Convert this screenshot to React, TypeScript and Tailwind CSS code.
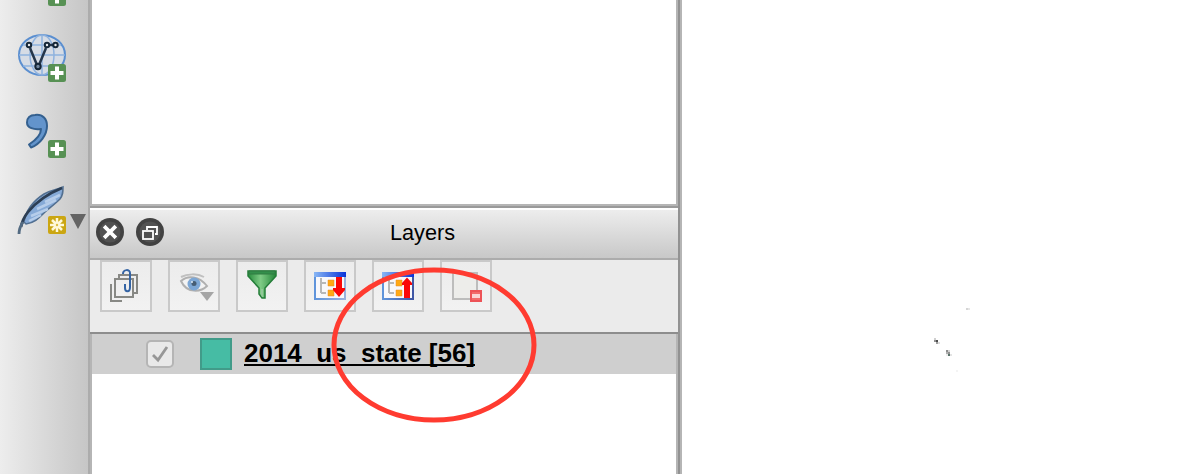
import React from "react";

function PlusBadge() {
  return (
    <svg className="block h-[18px] w-[18px]" viewBox="0 0 18 18">
      <rect width="18" height="18" rx="2.5" fill="#579154" />
      <path d="M9 2.500v13M2.500 9h13" stroke="#fff" strokeWidth="4" />
    </svg>
  );
}

function VectorGlobe() {
  return (
    <svg className="block h-[44px] w-[50px]" viewBox="0 0 50 44">
      <ellipse cx="24" cy="21" rx="23" ry="20" fill="#d6dce5" stroke="#5b8fd0" strokeWidth="2" />
      <g fill="none" stroke="#8fb2de" strokeWidth="1.5">
        <path d="M1 21h46M5 11h38M5 32h38M24 1v40" />
        <ellipse cx="24" cy="21" rx="12" ry="20" />
      </g>
      <path d="M12 14L19 31M28 14L21 31M31 11h4" stroke="#24364b" strokeWidth="2.500" fill="none" />
      <g fill="#e6e9ed" stroke="#152637" strokeWidth="2">
        <circle cx="11" cy="11" r="2.200" />
        <circle cx="29" cy="11" r="2.200" />
        <circle cx="37.5" cy="11" r="2.200" />
        <circle cx="20" cy="32.5" r="2.700" fill="#73889f" />
      </g>
    </svg>
  );
}

function Comma() {
  return (
    <svg className="block h-[36px] w-[25px]" viewBox="0 0 25 36">
      <path
        d="M11 2C19 1 23 6 23 13C23 22 16 31 7 34.500L5 31.500C12 27 17 21 17 16C10 17 3 15 3 9.500C3 5 6 2 11 2Z"
        fill="#6394cc" stroke="#34608f" strokeWidth="2" strokeLinejoin="round"
      />
    </svg>
  );
}

function Feather() {
  return (
    <svg className="block h-[50px] w-[48px]" viewBox="0 0 48 50">
      <path
        d="M7 37C9 25 16 16 27 9C34 5 40 5 46 2C46 7 46 10 43 14C37 20 31 24 27 28C21 34 17 38 9 39Z"
        fill="#86aad7" stroke="#526f90" strokeWidth="1.500"
      />
      <path d="M14 31L31 24M12 36L24 30M20 24L39 15M28 17L43 10" stroke="#b6cdea" strokeWidth="2.500" />
      <path d="M4 42C5 36 7 32 11 27C20 16 30 9 45 3" stroke="#2c3e54" strokeWidth="2.800" fill="none" />
      <path d="M2 49C2 44 4 40 6 37" stroke="#536b82" strokeWidth="2.800" fill="none" />
    </svg>
  );
}

function StarBadge() {
  return (
    <svg className="block h-[18px] w-[18px]" viewBox="0 0 18 18">
      <rect width="18" height="18" rx="2" fill="#cba612" />
      <path d="M9 2v14M2 9h14M4 4l10 10M14 4L4 14" stroke="#fff9d8" strokeWidth="2.500" />
      <circle cx="9" cy="9" r="1.200" fill="#dcbe44" />
    </svg>
  );
}

function Toolbar() {
  return (
    <aside className="relative h-[474px] w-[90px] shrink-0 overflow-hidden border-r-2 border-[#acacac] bg-[linear-gradient(to_right,#ededed,#c6c6c6)]">
      <div className="absolute left-[48px] top-[-12px]"><PlusBadge /></div>
      <div className="absolute left-[18px] top-[34px]"><VectorGlobe /></div>
      <div className="absolute left-[48px] top-[64px]"><PlusBadge /></div>
      <div className="absolute left-[24px] top-[113px]"><Comma /></div>
      <div className="absolute left-[48px] top-[140px]"><PlusBadge /></div>
      <div className="absolute left-[17px] top-[185px]"><Feather /></div>
      <div className="absolute left-[48px] top-[216px]"><StarBadge /></div>
      <svg className="absolute left-[70px] top-[214px] h-[16px] w-[16px]" viewBox="0 0 16 16">
        <path d="M0 0h16L8 15Z" fill="#646464" />
      </svg>
    </aside>
  );
}

function CloseIcon() {
  return (
    <svg className="block h-7 w-7" viewBox="0 0 28 28">
      <circle cx="14" cy="14" r="14" fill="#424242" />
      <circle cx="14" cy="14" r="10.500" fill="#525252" />
      <path d="M9.500 9.500l9 9M18.500 9.500l-9 9" stroke="#fff" strokeWidth="3.800" strokeLinecap="square" />
    </svg>
  );
}

function RestoreIcon() {
  return (
    <svg className="block h-7 w-7" viewBox="0 0 28 28">
      <circle cx="14" cy="14" r="14" fill="#424242" />
      <circle cx="14" cy="14" r="10.500" fill="#525252" />
      <path d="M11 12V9h10v7h-2" fill="none" stroke="#fff" strokeWidth="1.800" />
      <rect x="7" y="13" width="10" height="8" fill="#525252" stroke="#fff" strokeWidth="1.800" />
    </svg>
  );
}

function AddGroupIcon() {
  return (
    <svg className="h-12 w-12" viewBox="0 0 48 48" fill="none">
      <path d="M17 16v-3h18v18h-5M9 22v17h11" stroke="#888985" strokeWidth="2" />
      <rect x="13" y="17" width="18" height="18" stroke="#888985" strokeWidth="2" />
      <path d="M21 12C21 7 28 7 28 11v14c0 6-5 5-5 1v-4" stroke="#3464a4" strokeWidth="2" />
    </svg>
  );
}

function EyeIcon() {
  return (
    <svg className="h-12 w-12" viewBox="0 0 48 48" fill="none">
      <path d="M11 15C17 12 27 11 34 15" stroke="#c0c0c0" strokeWidth="2" />
      <path d="M11 19C18 13 29 14 37 24C31 30 17 32 11 19Z" fill="#f3f3f3" stroke="#b0b0b0" strokeWidth="2" />
      <circle cx="24" cy="22" r="6.500" fill="#7da7d5" />
      <circle cx="24" cy="21.500" r="2.500" fill="#465d74" />
      <circle cx="22" cy="20" r="1" fill="#dce8f3" />
      <path d="M30 30h14l-7 9Z" fill="#a5a5a5" />
    </svg>
  );
}

function FilterIcon() {
  return (
    <svg className="h-12 w-12" viewBox="0 0 48 48">
      <defs>
        <linearGradient id="funnel" x1="0" x2="1">
          <stop offset="0" stopColor="#278d3d" />
          <stop offset=".45" stopColor="#7ecb85" />
          <stop offset="1" stopColor="#238639" />
        </linearGradient>
      </defs>
      <path d="M10 9h28v5L27 26v10h-3l-3-4v-6L10 14Z" fill="url(#funnel)" stroke="#247d39" strokeWidth="1.500" />
      <path d="M11 9h26v3H11Z" fill="#338f4b" stroke="#307a42" />
      <path d="M23 27h2v8h-1l-1-2Z" fill="#92c79a" />
    </svg>
  );
}

function TreeIcon({ up = false }: { up?: boolean }) {
  return (
    <svg className="h-12 w-12" viewBox="0 0 48 48">
      <defs>
        <linearGradient id={up ? "barUp" : "barDown"} x1="0" x2="1">
          <stop offset="0" stopColor="#89b7f4" />
          <stop offset="1" stopColor="#0833d9" />
        </linearGradient>
        <linearGradient id={up ? "frameUp" : "frameDown"} x1="0" x2="1">
          <stop offset="0" stopColor="#5f94db" />
          <stop offset="1" stopColor={up ? "#4057a5" : "#9ab2de"} />
        </linearGradient>
      </defs>
      <rect x="9" y="11" width="30" height="26" fill="#f8f8fb" stroke={up ? "url(#frameUp)" : "url(#frameDown)"} strokeWidth="2" />
      <path d="M8 10h32v5H8Z" fill={up ? "url(#barUp)" : "url(#barDown)"} />
      <path d="M15 16v15M15 21h5M15 31h5" fill="none" stroke="#b8b8b8" strokeWidth="2" />
      <path d="M22 18h6v6h-6ZM22 28h6v6h-6Z" fill="#ffa914" stroke="#e58b28" strokeWidth=".500" />
      <path d={up ? "M33 15.500L28 21v2h2v13h6V23h2v-2Z" : "M30 15h6v11h3v2l-6 7-6-7v-2h3Z"} fill="#fa0808" />
    </svg>
  );
}

function RemoveIcon() {
  return (
    <svg className="h-12 w-12" viewBox="0 0 48 48">
      <path d="M11 11h24v26H11Z" fill="#ededea" stroke="#bdbdbc" strokeWidth="2" />
      <rect x="29" y="29" width="10" height="10" fill="#f26b6b" stroke="#ed5357" strokeWidth="2" />
      <path d="M30 34h8" stroke="#fbd5d5" strokeWidth="4" />
    </svg>
  );
}

function ToolButton({ children }: { children: React.ReactNode }) {
  return (
    <button className="flex h-[52px] w-[52px] items-center justify-center border-2 border-[#c9c9c9] bg-[linear-gradient(#ececec,#f2f2f2)]">
      {children}
    </button>
  );
}

function LayersPanel() {
  return (
    <section className="flex w-[588px] shrink-0 flex-col bg-white">
      <div className="h-[204px] border-x-2 border-[#b5b5b5] bg-white" />
      <div className="h-1 shrink-0 border-b-2 border-[#9a9a9a] bg-[#b5b5b5]" />
      <header className="flex h-[52px] shrink-0 border-b-2 border-t-2 border-b-[#acacac] border-t-white bg-[linear-gradient(#ededed,#c8c8c8)]">
        <div className="flex w-[76px] shrink-0 gap-3 pl-[6px] pt-[8px]"><CloseIcon /><RestoreIcon /></div>
        <h1 className="flex flex-1 justify-center pt-[7px]">
          <svg className="block h-8 w-[65px] overflow-visible">
            <text x="0" y="23" textLength="65" lengthAdjust="spacingAndGlyphs" className="fill-black font-['Liberation_Sans',sans-serif] text-[22px]">Layers</text>
          </svg>
        </h1>
      </header>
      <div className="flex h-[74px] shrink-0 items-start gap-4 border-b-2 border-[#8d8d8d] bg-[#ebebeb] pl-[10px]">
        <ToolButton><AddGroupIcon /></ToolButton>
        <ToolButton><EyeIcon /></ToolButton>
        <ToolButton><FilterIcon /></ToolButton>
        <ToolButton><TreeIcon /></ToolButton>
        <ToolButton><TreeIcon up /></ToolButton>
        <ToolButton><RemoveIcon /></ToolButton>
      </div>
      <div className="h-[140px] shrink-0 border-x-2 border-[#b5b5b5] bg-white">
        <div className="flex h-10 items-start bg-[#cfcfcf] pl-[54px]">
          <svg className="mt-[6px] h-7 w-7 shrink-0" viewBox="0 0 28 28">
            <rect x="1" y="1" width="26" height="26" rx="4" fill="#e9e9e9" stroke="#b5b5b5" strokeWidth="2" />
            <path d="M7 15l5 5L21 7" fill="none" stroke="#979797" strokeWidth="2.800" />
          </svg>
          <div className="ml-[26px] mt-1 h-8 w-8 shrink-0 border-2 border-[#419b89] bg-[#46bca4]" />
          <svg className="ml-3 h-10 w-[232px] shrink-0" viewBox="0 0 232 40">
            <text x="0" y="28" textLength="231" lengthAdjust="spacingAndGlyphs" className="fill-black font-['Liberation_Sans',sans-serif] text-[25px] font-bold">2014_us_state [56]</text>
            <path d="M0 31h231" stroke="#000" strokeWidth="2" />
          </svg>
        </div>
      </div>
    </section>
  );
}

function MapCanvas() {
  return (
    <main className="h-[474px] flex-1 border-l-2 border-[#b5b5b5] bg-white">
      <svg className="block h-[474px] w-full" viewBox="0 0 522 474" shapeRendering="crispEdges">
        <path d="M284 308h2v2h-2Z" fill="#d5d5d5" /><path d="M286 308h2v2h-2Z" fill="#e6e6e6" />
        <path d="M252 338h2v2h-2Z" fill="#d0d0d0" /><path d="M252 340h2v2h-2Z" fill="#909090" />
        <path d="M254 340h2v2h-2Z" fill="#4b4b4b" /><path d="M254 342h2v2h-2Z" fill="#a0a0a0" />
        <path d="M256 342h2v2h-2Z" fill="#dedede" /><path d="M264 350h2v2h-2Z" fill="#8e8e8e" />
        <path d="M266 350h2v2h-2Z" fill="#d5d5d5" /><path d="M264 352h2v2h-2Z" fill="#b2b2b2" />
        <path d="M266 352h2v2h-2Z" fill="#929292" /><path d="M266 354h2v2h-2Z" fill="#597269" />
        <path d="M264 354h2v2h-2Z" fill="#eee" /><path d="M268 354h2v2h-2Z" fill="#e4e4e4" />
        <path d="M274 370h2v2h-2Z" fill="#f4f4f4" />
      </svg>
    </main>
  );
}

export default function App() {
  return (
    <div className="relative flex h-[474px] w-[1204px] overflow-hidden bg-white font-['Liberation_Sans',sans-serif]">
      <Toolbar />
      <LayersPanel />
      <div className="h-[474px] w-[2px] shrink-0 bg-[#929292]" />
      <MapCanvas />
      <svg className="pointer-events-none absolute left-[330px] top-[266px] h-[158px] w-[208px]" viewBox="0 0 208 158">
        <ellipse cx="104" cy="79" rx="100" ry="75" fill="none" stroke="#ff3b30" strokeWidth="5" />
      </svg>
    </div>
  );
}
